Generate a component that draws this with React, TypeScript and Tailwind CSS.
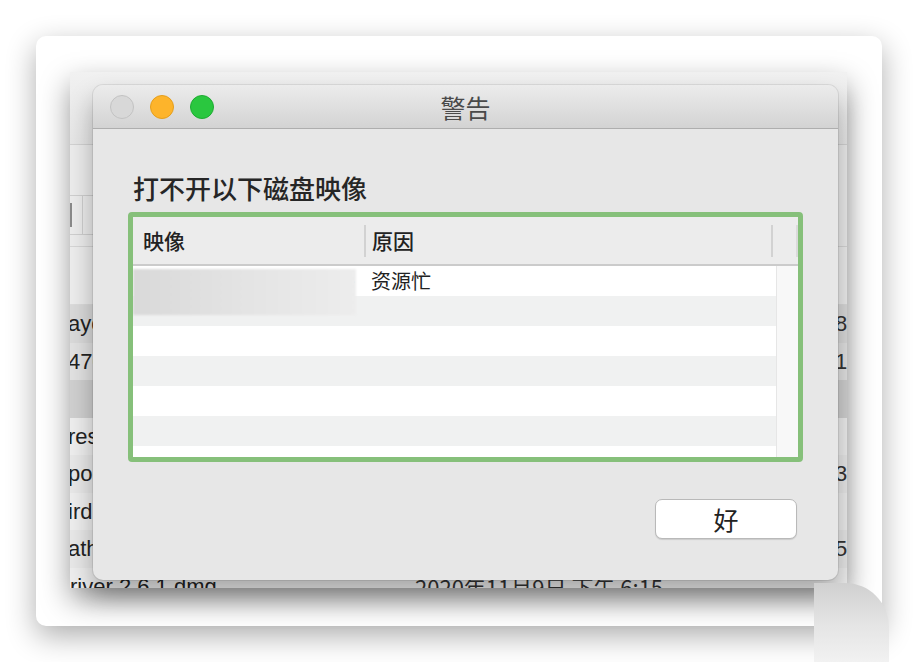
import React from 'react';

const cjk = "font-['Noto_Sans_CJK_SC','Noto_Sans',sans-serif]";
const latin = "font-['Liberation_Sans','Noto_Sans_CJK_SC',sans-serif]";

// rows of the finder list sitting behind the alert
const listRows = [
    { name: 'ayer', size: '8.4 MB', bg: 'bg-[#dadada]' },
    { name: '470', size: '1.2 GB', bg: 'bg-[#e2e2e2]' },
    { name: '', size: '', bg: 'bg-[#d0d0d0]' },
    { name: 'res', size: '', bg: 'bg-[#eeeeee]' },
    { name: 'poo', size: '3.1 MB', bg: 'bg-[#e8e8e8]' },
    { name: 'ird', size: '', bg: 'bg-[#eeeeee]' },
    { name: 'ath', size: '5.6 MB', bg: 'bg-[#e8e8e8]' },
];

function FinderBehind() {
    return (
        <div className="w-[777px] h-[516px] bg-[#ececec] overflow-hidden flex flex-col shadow-[0_12px_28px_rgba(0,0,0,0.4)]">
            {/* toolbar */}
            <div className="h-[73px] shrink-0 bg-gradient-to-b from-[#f1f1f1] to-[#e6e6e6] border-b border-[#d2d2d2]" />
            {/* path bar with segmented control */}
            <div className="h-[102px] shrink-0 border-b border-[#d6d6d6] flex items-start pt-[50px]">
                <div className="h-[40px] w-[30px] border-y border-r border-[#cfcfcf] flex items-center">
                    <div className="w-[2px] h-[24px] bg-[#8a8a8a]" />
                    <div className="ml-[10px] w-px h-full bg-[#cfcfcf]" />
                </div>
            </div>
            {/* list header */}
            <div className="h-[58px] shrink-0 border-b border-[#dcdcdc] bg-[#ededed]" />
            {/* rows */}
            {listRows.map((r, i) => (
                <div key={i} className={`h-[37.5px] shrink-0 flex items-center ${r.bg}`}>
                    <div className={`${latin} text-[22px] text-[#222] w-[360px] -ml-[2px]`}>{r.name}</div>
                    <div className="flex-1" />
                    <div className={`${latin} text-[22px] text-[#333] w-[12px] overflow-hidden whitespace-nowrap`}>{r.size}</div>
                </div>
            ))}
            <div className="h-[37.5px] shrink-0 flex items-center bg-[#eeeeee]">
                <div className={`${latin} text-[22px] text-[#222] w-[345px] whitespace-nowrap`}>river 2.6.1.dmg</div>
                <div className={`${cjk} text-[22px] text-[#333] whitespace-nowrap`}>2020年11月9日 下午 6:15</div>
            </div>
        </div>
    );
}

function AlertDialog() {
    const stripes = ['bg-white', 'bg-[#f0f1f1]', 'bg-white', 'bg-[#f0f1f1]', 'bg-white', 'bg-[#f0f1f1]', 'bg-white'];

    return (
        <div className="w-[745px] h-[495px] rounded-[10px] overflow-hidden flex flex-col bg-[#e7e7e7] shadow-[0_14px_26px_rgba(0,0,0,0.3),0_0_0_1px_rgba(0,0,0,0.08)]">
            {/* title bar */}
            <div className="h-[44px] shrink-0 grid grid-cols-[1fr_auto_1fr] items-center bg-gradient-to-b from-[#ececec] to-[#d3d3d3] border-b border-[#aeaeae]">
                <div className="flex items-center gap-[16px] pl-[17px]">
                    <div className="w-[24px] h-[24px] rounded-full bg-[#d8d8d8] border border-[#c2c2c2]" />
                    <div className="w-[24px] h-[24px] rounded-full bg-[#fdb42b] border border-[#e49e1d]" />
                    <div className="w-[24px] h-[24px] rounded-full bg-[#2ac73f] border border-[#1eab32]" />
                </div>
                <div className={`${cjk} text-[25px] leading-[30px] text-[#4a4a4a]`}>警告</div>
                <div />
            </div>

            {/* body */}
            <div className="flex-1 flex flex-col px-[35px] pt-[44px]">
                <div className={`${cjk} text-[26px] leading-[30px] font-medium text-[#262626] ml-[5px]`}>打不开以下磁盘映像</div>

                {/* table with focus ring */}
                <div className="mt-[9px] h-[250px] border-[5px] border-[#86c07a] rounded-[4px] flex flex-col overflow-hidden bg-white">
                    <div className="h-[49px] shrink-0 flex items-center bg-[#ececec] border-b-2 border-[#cbcbcb]">
                        <div className={`${cjk} w-[231px] pl-[10px] text-[21px] font-medium text-[#222]`}>映像</div>
                        <div className="w-[2px] h-[32px] bg-[#d2d2d2]" />
                        <div className={`${cjk} w-[405px] pl-[6px] text-[21px] font-medium text-[#222]`}>原因</div>
                        <div className="w-[2px] h-[32px] bg-[#d2d2d2]" />
                        <div className="flex-1" />
                        <div className="w-[2px] h-[32px] bg-[#dadada]" />
                    </div>
                    <div className="flex-1 flex relative overflow-hidden">
                        <div className="flex-1 flex flex-col">
                            {stripes.map((s, i) => (
                                <div key={i} className={`h-[30px] shrink-0 flex items-center ${s}`}>
                                    {i === 0 && (
                                        <>
                                            <div className="w-[223px] flex justify-end pr-[1px]">
                                                <span className={`${latin} text-[14px] text-[#555]`}>›</span>
                                            </div>
                                            <div className={`${cjk} pl-[15px] text-[20px] leading-[24px] text-[#222]`}>资源忙</div>
                                        </>
                                    )}
                                </div>
                            ))}
                        </div>
                        <div className="w-[22px] shrink-0 bg-[#f8f8f8] border-l border-[#e6e6e6]" />
                        {/* blurred filename */}
                        <div className="absolute left-0 top-[3px] w-[223px] h-[46px] bg-gradient-to-r from-[#d9d9d9] via-[#e4e4e4] to-[#ededed] blur-[1px]" />
                    </div>
                </div>

                <div className="mt-[37px] flex justify-end pr-[6px]">
                    <button className={`${cjk} w-[142px] h-[40px] rounded-[7px] bg-white border border-[#b9b9b9] shadow-[0_1px_1px_rgba(0,0,0,0.12)] text-[25px] leading-[30px] text-[#222] flex items-center justify-center`}>
                        好
                    </button>
                </div>
            </div>
        </div>
    );
}

export default function App() {
    return (
        <div className="w-[918px] h-[662px] bg-white relative overflow-hidden pl-[36px] pt-[36px]">
            <div className="w-[846px] h-[590px] bg-white rounded-[10px] shadow-[0_10px_30px_rgba(0,0,0,0.32)] pl-[34px] pt-[36px] relative">
                <div className="relative">
                    <FinderBehind />
                    <div className="absolute left-[23px] top-[13px]">
                        <AlertDialog />
                    </div>
                </div>
            </div>
            {/* odd rounded shadow blob at the lower right corner */}
            <div className="absolute left-[814px] top-[583px] w-[75px] h-[80px] rounded-tr-[44px] bg-gradient-to-b from-[#d0d0d0] via-[#e4e4e4] to-[#f2f2f2]" />
        </div>
    );
}
